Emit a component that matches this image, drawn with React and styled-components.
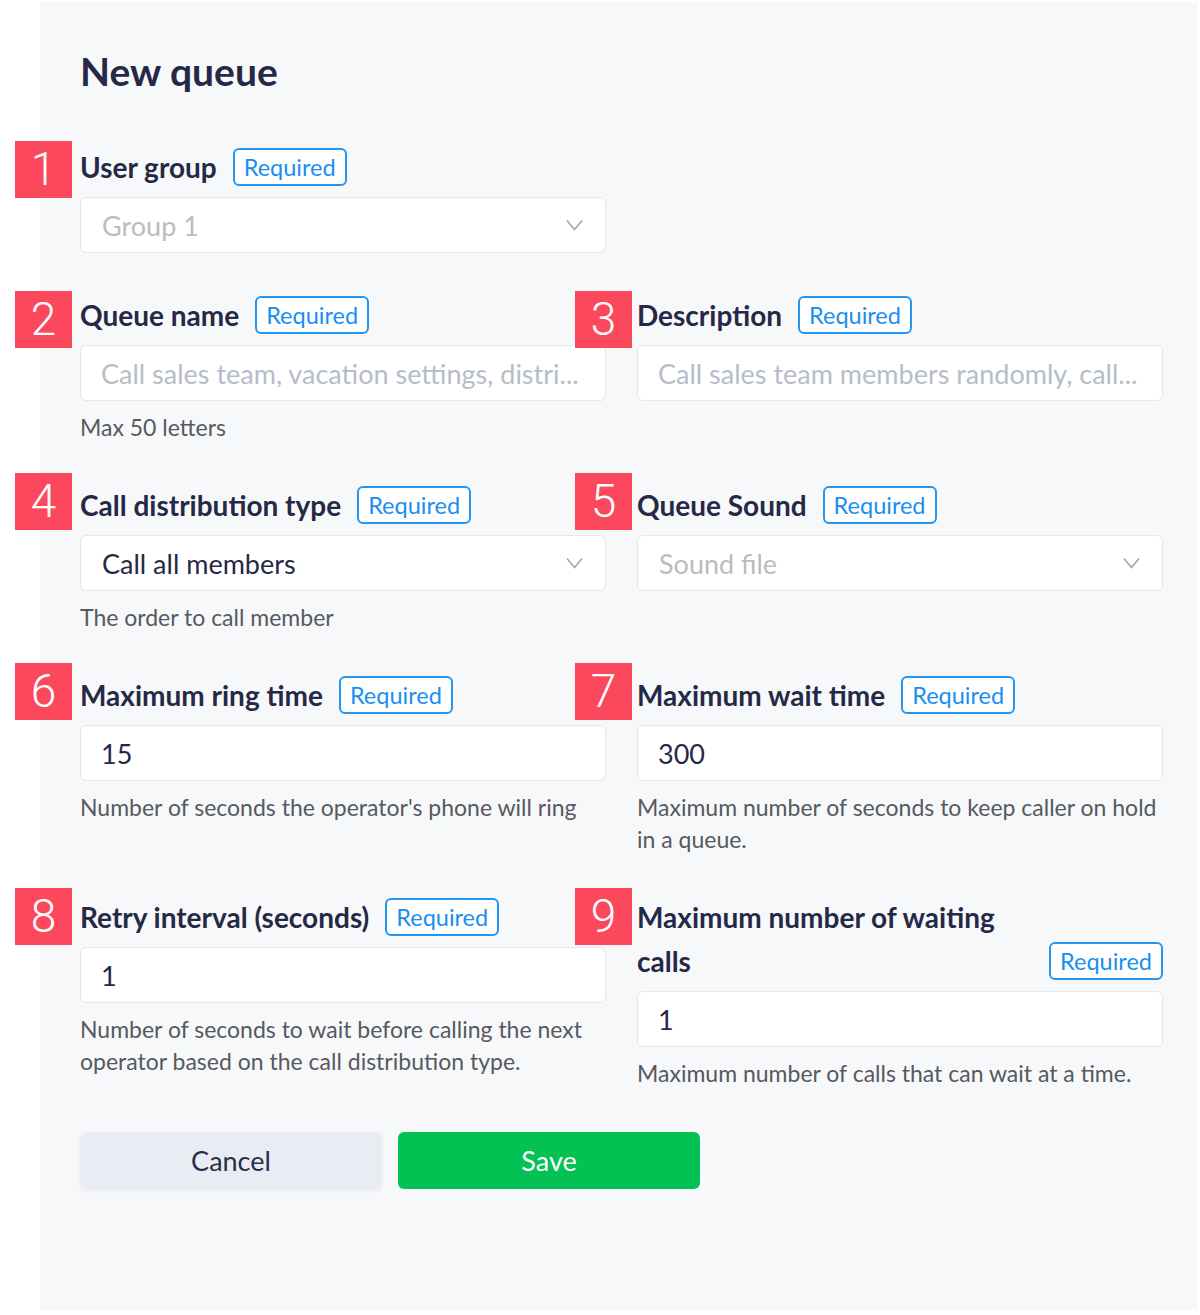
import React from "react";
import styled, { createGlobalStyle } from "styled-components";

const GlobalStyle = createGlobalStyle`
  html, body { margin: 0; padding: 0; background: #ffffff; }
  body { font-family: "Lato", "Noto Sans", sans-serif; -webkit-font-smoothing: antialiased; }
  * { box-sizing: border-box; }
`;

const Page = styled.div`
  padding: 2px 3px 5px 40px;
`;

const Panel = styled.main`
  background: #f7f8fa;
  padding: 45px 34px 121px 40px;
`;

const Title = styled.h1`
  margin: 0 0 50px;
  font-size: 39px;
  line-height: 48px;
  font-weight: 700;
  color: #262946;
`;

const Grid = styled.div`
  display: grid;
  grid-template-columns: 526px 526px;
  column-gap: 31px;
  row-gap: 40px;
`;

const Field = styled.div`
  position: relative;
  display: flex;
  flex-direction: column;
`;

const Marker = styled.span`
  position: absolute;
  left: ${(p) => p.$x}px;
  top: ${(p) => p.$y}px;
  width: 57px;
  height: 57px;
  background: #fc485d;
  color: #ffffff;
  font-family: "Roboto", "Liberation Sans", sans-serif;
  font-weight: 300;
  font-size: 46px;
  line-height: 57px;
  text-align: center;
`;

const Header = styled.div`
  display: flex;
  align-items: flex-end;
  gap: 16px;
  margin-bottom: 8px;
`;

const Label = styled.label`
  font-size: 28px;
  line-height: 44px;
  font-weight: 700;
  color: #262946;
`;

const Required = styled.span`
  flex: none;
  height: 38px;
  margin-bottom: 3px;
  padding: 0 9px;
  border: 2px solid #2196f3;
  border-radius: 6px;
  background: #ffffff;
  color: #1a8ef0;
  font-size: 23.5px;
  line-height: 34px;
`;

const Input = styled.input`
  display: block;
  width: 100%;
  height: 56px;
  margin: 0;
  padding: 0 20px;
  background: #ffffff;
  border: 1px solid #e3e6eb;
  border-radius: 6px;
  font-family: inherit;
  font-size: 27px;
  color: #262946;
  outline: none;
  text-overflow: ellipsis;
  &::placeholder {
    color: #b6bdc8;
    opacity: 1;
  }
`;

const Select = styled.div`
  display: flex;
  align-items: center;
  justify-content: space-between;
  height: 56px;
  padding: 0 22px 0 21px;
  background: #ffffff;
  border: 1px solid #e3e6eb;
  border-radius: 6px;
  font-size: 27px;
  color: ${(p) => (p.$placeholder ? "#bcbcbc" : "#262946")};
`;

const Helper = styled.p`
  margin: 10px 0 0;
  font-size: 23px;
  line-height: 32px;
  color: #56595f;
`;

const Actions = styled.div`
  display: flex;
  gap: 16px;
  margin-top: 43px;
`;

const Button = styled.button`
  width: 302px;
  height: 57px;
  border: none;
  border-radius: 6px;
  font-family: inherit;
  font-size: 27px;
  background: ${(p) => (p.$primary ? "#04c153" : "#e9edf3")};
  color: ${(p) => (p.$primary ? "#ffffff" : "#2b2d4d")};
  box-shadow: ${(p) => (p.$primary ? "none" : "0 2px 4px rgba(20, 30, 60, 0.06)")};
  cursor: pointer;
`;

const Chevron = () => (
  <svg width="17" height="12" viewBox="0 0 17 12" fill="none">
    <polyline points="1,1.5 8.5,10.5 16,1.5" stroke="#9ea3ac" strokeWidth="1.5" />
  </svg>
);

const FieldBlock = ({ n, x, y, label, children, helper }) => (
  <Field>
    <Marker $x={x} $y={y}>{n}</Marker>
    <Header>
      <Label>{label}</Label>
      <Required>Required</Required>
    </Header>
    {children}
    {helper && <Helper>{helper}</Helper>}
  </Field>
);

export default function App() {
  return (
    <>
      <GlobalStyle />
      <Page>
        <Panel>
          <Title>New queue</Title>
          <Grid>
            <FieldBlock n="1" x={-65} y={-4} label="User group">
              <Select $placeholder>
                <span>Group 1</span>
                <Chevron />
              </Select>
            </FieldBlock>
            <div />
            <FieldBlock n="2" x={-65} y={-2} label="Queue name" helper="Max 50 letters">
              <Input readOnly placeholder="Call sales team, vacation settings, distri..." />
            </FieldBlock>
            <FieldBlock n="3" x={-62} y={-2} label="Description">
              <Input readOnly placeholder="Call sales team members randomly, call..." />
            </FieldBlock>
            <FieldBlock n="4" x={-65} y={-10} label="Call distribution type" helper="The order to call member">
              <Select>
                <span>Call all members</span>
                <Chevron />
              </Select>
            </FieldBlock>
            <FieldBlock n="5" x={-62} y={-10} label="Queue Sound">
              <Select $placeholder>
                <span>Sound file</span>
                <Chevron />
              </Select>
            </FieldBlock>
            <FieldBlock n="6" x={-65} y={-10} label="Maximum ring time" helper="Number of seconds the operator's phone will ring">
              <Input readOnly defaultValue="15" />
            </FieldBlock>
            <FieldBlock n="7" x={-62} y={-10} label="Maximum wait time" helper="Maximum number of seconds to keep caller on hold in a queue.">
              <Input readOnly defaultValue="300" />
            </FieldBlock>
            <FieldBlock n="8" x={-65} y={-7} label="Retry interval (seconds)" helper="Number of seconds to wait before calling the next operator based on the call distribution type.">
              <Input readOnly defaultValue="1" />
            </FieldBlock>
            <FieldBlock n="9" x={-62} y={-7} label="Maximum number of waiting calls" helper="Maximum number of calls that can wait at a time.">
              <Input readOnly defaultValue="1" />
            </FieldBlock>
          </Grid>
          <Actions>
            <Button>Cancel</Button>
            <Button $primary>Save</Button>
          </Actions>
        </Panel>
      </Page>
    </>
  );
}
